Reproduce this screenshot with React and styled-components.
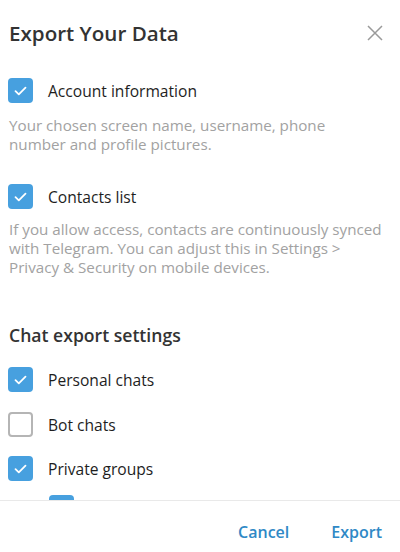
import React from "react";
import styled, { createGlobalStyle } from "styled-components";

const Global = createGlobalStyle`
  html, body { margin: 0; padding: 0; background: #fff; }
  body { font-family: "Open Sans", "Noto Sans", sans-serif; -webkit-font-smoothing: antialiased; }
`;

const Dialog = styled.div`
  width: 400px;
  height: 552px;
  display: flex;
  flex-direction: column;
  background: #fff;
  overflow: hidden;
`;

const Header = styled.div`
  display: flex;
  align-items: center;
  justify-content: space-between;
  padding: 19px 17px 0 9px;
`;

const Title = styled.h1`
  margin: 0;
  font-size: 20.6px;
  line-height: 28px;
  font-weight: 600;
  color: #333;
`;

const CloseButton = styled.button`
  border: 0;
  background: none;
  padding: 0;
  width: 16px;
  height: 16px;
  display: flex;
  align-items: center;
  justify-content: center;
  color: #9a9a9a;
  cursor: pointer;
`;

const Body = styled.div`
  flex: 1;
  min-height: 0;
  overflow: hidden;
  padding: 31px 8px 0 8px;
`;

const Row = styled.label`
  display: flex;
  align-items: center;
  gap: 15px;
  height: 25px;
  margin-top: ${(p) => p.$mt || 0}px;
  margin-left: ${(p) => p.$indent || 0}px;
  cursor: pointer;
`;

const Box = styled.span`
  flex: 0 0 auto;
  box-sizing: border-box;
  width: 25px;
  height: 25px;
  border-radius: 4px;
  display: flex;
  align-items: center;
  justify-content: center;
  background: ${(p) => (p.$on ? "#47a0df" : "#fff")};
  border: ${(p) => (p.$on ? "none" : "2px solid #b5b5b5")};
`;

const Label = styled.span`
  font-size: 15.6px;
  line-height: 20px;
  color: #1e1e1e;
`;

const Desc = styled.p`
  margin: ${(p) => p.$mt}px 0 0 1px;
  font-size: 15.2px;
  line-height: 19px;
  color: #a2a2a2;
`;

const Section = styled.h2`
  margin: 46px 0 0 1px;
  font-size: 17.6px;
  line-height: 24px;
  font-weight: 600;
  color: #333;
`;

const Divider = styled.div`
  height: 1px;
  background: #e9e9e9;
`;

const Footer = styled.div`
  height: 51px;
  box-sizing: border-box;
  display: flex;
  align-items: flex-start;
  justify-content: flex-end;
  gap: 42px;
  padding: 20px 18px 0 0;
`;

const FooterButton = styled.button`
  border: 0;
  background: none;
  padding: 0;
  font-family: inherit;
  font-size: 16px;
  line-height: 22px;
  font-weight: 600;
  color: #2f89c6;
  cursor: pointer;
`;

function Check({ on }) {
  return (
    <Box $on={on}>
      {on && (
        <svg width="13" height="10" viewBox="0 0 13 10" fill="none">
          <path d="M1.5 5.2 L4.8 8.3 L11.5 1.7" stroke="#fff" strokeWidth="1.8" strokeLinecap="round" strokeLinejoin="round" />
        </svg>
      )}
    </Box>
  );
}

function Option({ on, children, mt, indent }) {
  return (
    <Row $mt={mt} $indent={indent}>
      <Check on={on} />
      {children && <Label>{children}</Label>}
    </Row>
  );
}

export default function App() {
  return (
    <Dialog>
      <Global />
      <Header>
        <Title>Export Your Data</Title>
        <CloseButton aria-label="Close">
          <svg width="16" height="16" viewBox="0 0 16 16">
            <path d="M1 1 L15 15 M15 1 L1 15" stroke="currentColor" strokeWidth="1.5" />
          </svg>
        </CloseButton>
      </Header>
      <Body>
        <Option on>Account information</Option>
        <Desc $mt={13}>
          Your chosen screen name, username, phone
          <br />
          number and profile pictures.
        </Desc>
        <Option on mt={30}>Contacts list</Option>
        <Desc $mt={11}>
          If you allow access, contacts are continuously synced
          <br />
          with Telegram. You can adjust this in Settings &gt;
          <br />
          Privacy &amp; Security on mobile devices.
        </Desc>
        <Section>Chat export settings</Section>
        <Option on mt={20}>Personal chats</Option>
        <Option mt={20}>Bot chats</Option>
        <Option on mt={19}>Private groups</Option>
        <Option on mt={14} indent={41} />
      </Body>
      <Divider />
      <Footer>
        <FooterButton>Cancel</FooterButton>
        <FooterButton>Export</FooterButton>
      </Footer>
    </Dialog>
  );
}
